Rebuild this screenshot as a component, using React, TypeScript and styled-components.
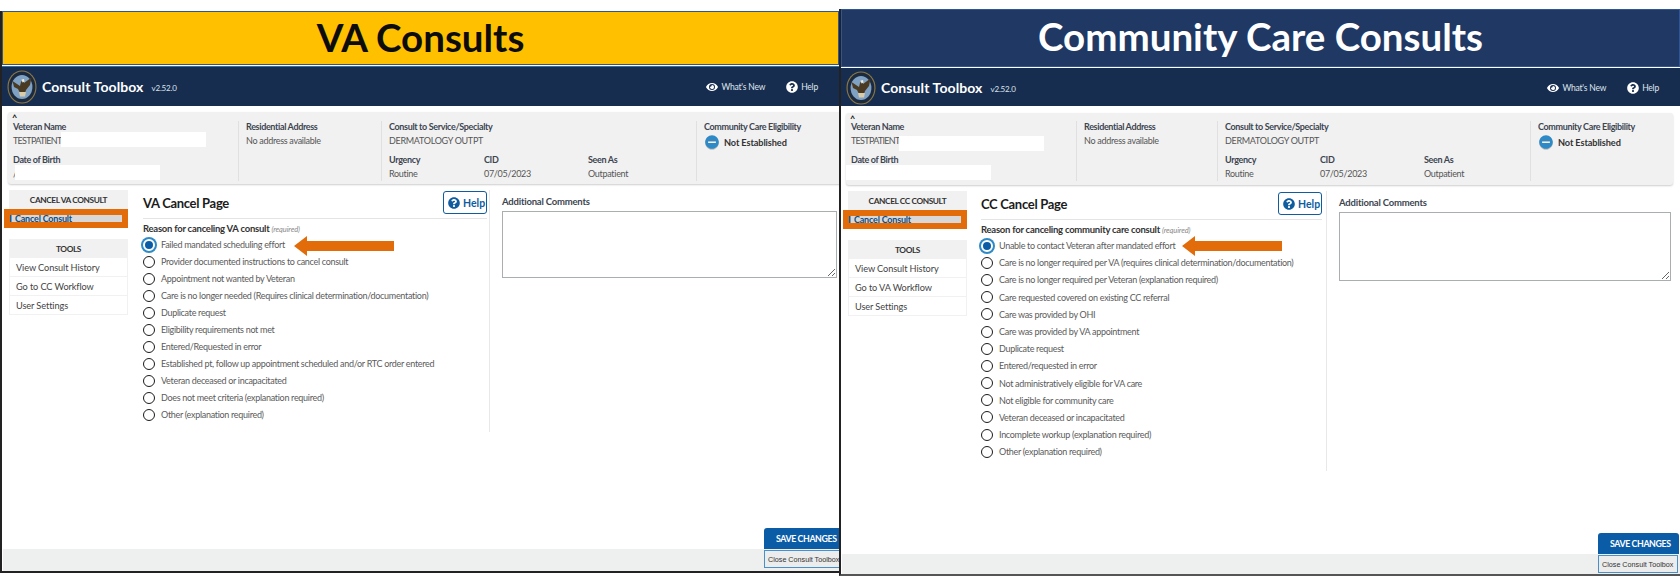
import React from "react";
import styled, { createGlobalStyle } from "styled-components";
import { FaEye, FaQuestionCircle, FaMinusCircle } from "react-icons/fa";

const Global = createGlobalStyle`
  html, body { margin: 0; padding: 0; background: #fff; overflow: hidden; }
  body { font-family: Lato, "Liberation Sans", sans-serif; color: #333; }
  * { box-sizing: border-box; }
`;

type V = { $cc: boolean };

const Page = styled.div`
  display: grid;
  grid-template-columns: 839px 841px;
  width: 1680px;
  height: 577px;
  overflow: hidden;
`;

const Panel = styled.section<V>`
  position: relative;
  display: flex;
  flex-direction: column;
  height: ${(p) => (p.$cc ? 567 : 562)}px;
  margin-top: ${(p) => (p.$cc ? 9 : 11)}px;
  border-left: 2px solid #222;
  border-bottom: 2px solid ${(p) => (p.$cc ? "#555" : "#222")};
  overflow: hidden;
`;

const Banner = styled.h1<V>`
  margin: 0 0 1px;
  height: ${(p) => (p.$cc ? 58 : 54)}px;
  flex: none;
  display: flex;
  align-items: center;
  justify-content: center;
  background: ${(p) => (p.$cc ? "#1f3864" : "#ffc000")};
  border: 1px solid #2f5597;
  color: ${(p) => (p.$cc ? "#fff" : "#0c0c0c")};
  font-size: 38.5px;
  font-weight: 700;
  padding-bottom: ${(p) => (p.$cc ? 4 : 2)}px;
`;

const Nav = styled.header<V>`
  height: ${(p) => (p.$cc ? 38 : 40)}px;
  flex: none;
  display: flex;
  align-items: center;
  background: #172d50;
  border-top: 1px solid ${(p) => (p.$cc ? "#172d50" : "#3a6e98")};
  padding: 0 21px 0 5px;
  color: #fff;
`;

const Brand = styled.span`
  margin-left: 5px;
  font-size: 14px;
  font-weight: 700;
  letter-spacing: 0.1px;
`;

const Version = styled.span`
  margin: 3px auto 0 8px;
  font-size: 8px;
  letter-spacing: -0.2px;
  color: #dfe5ec;
`;

const NavLink = styled.span`
  display: inline-flex;
  align-items: center;
  gap: 3px;
  margin-left: 21px;
  font-size: 8.5px;
  letter-spacing: -0.2px;
  color: #dfe5ec;
  svg { color: #fff; }
`;

const Info = styled.div<V>`
  display: grid;
  position: relative;
  grid-template-columns: ${(p) => (p.$cc ? "230px 141px 313px 1fr" : "230px 143px 315px 1fr")};
  flex: none;
  height: 72px;
  margin: ${(p) => (p.$cc ? "7px 7px 0 5px" : "6px -4px 0 6px")};
  padding-top: ${(p) => (p.$cc ? 8 : 9)}px;
  background: #f1f1f1;
  border-radius: 3px;
  box-shadow: 0 1px 2px rgba(0, 0, 0, 0.2);
`;

const Caret = styled.span`
  position: absolute;
  left: 4px;
  top: 1px;
  font-size: 9px;
  font-weight: 700;
  line-height: 10px;
  color: #111;
`;

const InfoCell = styled.div<{ $first?: boolean }>`
  display: flex;
  flex-direction: column;
  gap: 5.5px;
  height: 60px;
  padding-left: ${(p) => (p.$first ? 5 : 7)}px;
  border-left: ${(p) => (p.$first ? "none" : "1px solid #e0e0e0")};
`;

const Field = styled.div`
  position: relative;
`;

const Label = styled.div`
  font-size: 9px;
  font-weight: 700;
  letter-spacing: -0.35px;
  line-height: 12px;
  color: #3d4551;
  white-space: nowrap;
`;

const Value = styled.div<{ $tight?: boolean }>`
  margin-top: 1px;
  font-size: 9px;
  letter-spacing: ${(p) => (p.$tight ? -0.7 : -0.3)}px;
  line-height: 14px;
  color: #555;
  white-space: nowrap;
`;

const Redact = styled.span<{ $x: number; $y: number }>`
  position: absolute;
  left: ${(p) => p.$x}px;
  top: ${(p) => p.$y}px;
  width: 145px;
  height: 15px;
  background: #fff;
`;

const TripleRow = styled.div`
  display: grid;
  grid-template-columns: 95px 104px 1fr;
`;

const Status = styled.div`
  display: flex;
  align-items: center;
  gap: 5px;
  margin: 2px 0 0 1px;
  font-size: 9.2px;
  font-weight: 700;
  letter-spacing: -0.1px;
  color: #333;
  svg { color: #2e8ac6; filter: drop-shadow(0 1px 0 #bbb); }
`;

const Body = styled.div`
  flex: 1;
  display: flex;
  align-items: flex-start;
  padding: 6px 0 0 7px;
  min-height: 0;
`;

const Side = styled.aside`
  width: 119px;
  flex: none;
  display: flex;
  flex-direction: column;
  gap: 11px;
`;

const SideGroup = styled.div`
  display: flex;
  flex-direction: column;
`;

const SideHead = styled.div`
  height: 19px;
  display: flex;
  align-items: center;
  justify-content: center;
  background: #f1f1f1;
  font-size: 8.3px;
  font-weight: 700;
  letter-spacing: -0.4px;
  color: #333;
`;

const CurrentItem = styled.div`
  height: 19px;
  margin-left: -5px;
  display: flex;
  align-items: center;
  padding-left: 5px;
  background: #d8d8d8;
  border: 6px solid #e36c0a;
  box-shadow: inset 1.5px 0 #0f5c9e;
  font-size: 9px;
  font-weight: 700;
  letter-spacing: -0.2px;
  color: #0f4c81;
`;

const SideItem = styled.div`
  height: 19px;
  display: flex;
  align-items: center;
  padding-left: 6px;
  border: 1.5px solid #f1f1f1;
  border-top-width: 0;
  font-size: 9.2px;
  letter-spacing: -0.1px;
  color: #444;
`;

const Form = styled.form<V>`
  flex: none;
  margin-left: ${(p) => (p.$cc ? 14 : 15)}px;
  width: ${(p) => (p.$cc ? 346 : 347)}px;
  height: ${(p) => (p.$cc ? 280 : 242)}px;
  padding-right: ${(p) => (p.$cc ? 4 : 2)}px;
  border-right: 1px solid #e8e8e8;
`;

const FormHead = styled.div`
  height: 29px;
  display: flex;
  align-items: center;
  justify-content: space-between;
  border-bottom: 1px solid #e4e4e4;
  padding-bottom: 3px;
`;

const FormTitle = styled.h2`
  margin: 0;
  font-size: 13px;
  font-weight: 700;
  letter-spacing: -0.3px;
  color: #1b1b1b;
`;

const HelpButton = styled.button`
  display: inline-flex;
  align-items: center;
  gap: 3px;
  width: 44px;
  height: 23px;
  padding: 0 0 0 4px;
  background: #fff;
  border: 1px solid #0f5c9e;
  border-radius: 3px;
  font: 700 10.5px Lato, sans-serif;
  color: #0f5c9e;
`;

const Legend = styled.div`
  margin: 3px 0 0;
  font-size: 9.5px;
  font-weight: 700;
  letter-spacing: -0.25px;
  line-height: 13px;
  color: #333;
`;

const Hint = styled.em`
  font-size: 7.5px;
  font-weight: 400;
  letter-spacing: -0.1px;
  color: #8a8a8a;
`;

const Option = styled.label<V>`
  display: flex;
  align-items: center;
  height: ${(p) => (p.$cc ? 17.2 : 17)}px;
  gap: 6px;
  font-size: 9px;
  letter-spacing: -0.3px;
  color: #5b5b5b;
  white-space: nowrap;
`;

const Radio = styled.span<{ $on?: boolean }>`
  width: 12px;
  height: 12px;
  flex: none;
  border-radius: 50%;
  border: ${(p) => (p.$on ? "2.5px solid #fff" : "1.4px solid #1b1b1b")};
  background: ${(p) => (p.$on ? "#0a5ca6" : "#fff")};
  box-shadow: ${(p) => (p.$on ? "0 0 0 2px #2e8ac6" : "none")};
`;

const Comments = styled.div<V>`
  flex: 1;
  min-width: 0;
  margin: 4px ${(p) => (p.$cc ? 9 : 2)}px 0 12px;
`;

const CommentLabel = styled.div`
  margin-bottom: 2px;
  font-size: 9.5px;
  font-weight: 700;
  letter-spacing: -0.2px;
  line-height: 15px;
  color: #3d4551;
`;

const Area = styled.textarea<V>`
  display: block;
  width: 100%;
  height: ${(p) => (p.$cc ? 69 : 67)}px;
  background: #fff;
  border: 1px solid #a9aeb1;
  outline: none;
`;

const SaveRow = styled.div<V>`
  display: flex;
  justify-content: flex-end;
  flex: none;
  margin-right: ${(p) => (p.$cc ? 1 : -6)}px;
`;

const Save = styled.button`
  width: 81px;
  height: 21px;
  padding: 0 0 0 12px;
  background: #0a5ca6;
  border: 0;
  border-radius: 3px 3px 0 0;
  font: 700 8.8px Lato, sans-serif;
  letter-spacing: -0.4px;
  color: #fff;
  text-align: left;
`;

const Footer = styled.footer<V>`
  flex: none;
  height: ${(p) => (p.$cc ? 20 : 22)}px;
  display: flex;
  justify-content: flex-end;
  align-items: flex-start;
  background: #eef0f0;
  padding: ${(p) => (p.$cc ? "1px 2px 0 0" : "1px 0 0 0")};
  margin-left: 1px;
  margin-right: ${(p) => (p.$cc ? 0 : -5)}px;
`;

const Close = styled.button`
  width: 80px;
  height: 18px;
  padding: 0 0 0 3px;
  background: #ececec;
  border: 1px solid #4a90c8;
  font: 400 7.2px "Liberation Sans", sans-serif;
  color: #333;
  text-align: left;
  white-space: nowrap;
`;

const Arrow = styled.svg<V>`
  position: absolute;
  left: ${(p) => (p.$cc ? 339 : 290)}px;
  top: ${(p) => (p.$cc ? 226 : 224)}px;
`;

function Seal() {
  return (
    <svg width="30" height="34" viewBox="0 0 30 34" aria-hidden="true">
      <ellipse cx="15" cy="17" rx="14.5" ry="16.5" fill="#8f7a45" />
      <ellipse cx="15" cy="17" rx="13.4" ry="15.4" fill="#1c2a40" />
      <ellipse cx="15" cy="17" rx="10.4" ry="12" fill="#7fa2c4" />
      <path d="M5.5 11 L13 16 L14 12 L16 9.5 L17 13 L24.5 7.5 L23 15 L19 20 L18 23 L13 23 L11 19 L7 17 Z" fill="#4a3a22" />
      <path d="M12 22 L19 22 L18 26.5 L13 26.5 Z" fill="#d9ccab" />
      <path d="M14.5 9.5 L17 9 L17.5 11.5 L15.5 12.5 Z" fill="#efe9d6" />
    </svg>
  );
}

const vaReasons = [
  "Provider documented instructions to cancel consult",
  "Appointment not wanted by Veteran",
  "Care is no longer needed (Requires clinical determination/documentation)",
  "Duplicate request",
  "Eligibility requirements not met",
  "Entered/Requested in error",
  "Established pt, follow up appointment scheduled and/or RTC order entered",
  "Veteran deceased or incapacitated",
  "Does not meet criteria (explanation required)",
  "Other (explanation required)",
];

const ccReasons = [
  "Care is no longer required per VA (requires clinical determination/documentation)",
  "Care is no longer required per Veteran (explanation required)",
  "Care requested covered on existing CC referral",
  "Care was provided by OHI",
  "Care was provided by VA appointment",
  "Duplicate request",
  "Entered/requested in error",
  "Not administratively eligible for VA care",
  "Not eligible for community care",
  "Veteran deceased or incapacitated",
  "Incomplete workup (explanation required)",
  "Other (explanation required)",
];

type ConsultProps = {
  cc: boolean;
  banner: string;
  sideHead: string;
  workflow: string;
  title: string;
  legend: string;
  selected: string;
  reasons: string[];
};

function Consult({ cc, banner, sideHead, workflow, title, legend, selected, reasons }: ConsultProps) {
  return (
    <Panel $cc={cc}>
      <Banner $cc={cc}>{banner}</Banner>
      <Nav $cc={cc}>
        <Seal />
        <Brand>Consult Toolbox</Brand>
        <Version>v2.52.0</Version>
        <NavLink><FaEye size={12} />What's New</NavLink>
        <NavLink><FaQuestionCircle size={12} />Help</NavLink>
      </Nav>
      <Info $cc={cc}>
        <Caret>^</Caret>
        <InfoCell $first>
          <Field>
            <Label>Veteran Name</Label>
            <Value $tight>TESTPATIENT</Value>
            <Redact $x={48} $y={cc ? 15 : 11} />
          </Field>
          <Field>
            <Label>Date of Birth</Label>
            <Value>/</Value>
            <Redact $x={cc ? -5 : 2} $y={11} />
          </Field>
        </InfoCell>
        <InfoCell>
          <Field>
            <Label>Residential Address</Label>
            <Value>No address available</Value>
          </Field>
        </InfoCell>
        <InfoCell>
          <Field>
            <Label>Consult to Service/Specialty</Label>
            <Value>DERMATOLOGY OUTPT</Value>
          </Field>
          <TripleRow>
            <Field><Label>Urgency</Label><Value>Routine</Value></Field>
            <Field><Label>CID</Label><Value>07/05/2023</Value></Field>
            <Field><Label>Seen As</Label><Value>Outpatient</Value></Field>
          </TripleRow>
        </InfoCell>
        <InfoCell>
          <Field>
            <Label>Community Care Eligibility</Label>
            <Status><FaMinusCircle size={14} />Not Established</Status>
          </Field>
        </InfoCell>
      </Info>
      <Body>
        <Side>
          <SideGroup>
            <SideHead>{sideHead}</SideHead>
            <CurrentItem>Cancel Consult</CurrentItem>
          </SideGroup>
          <SideGroup>
            <SideHead>TOOLS</SideHead>
            <SideItem>View Consult History</SideItem>
            <SideItem>{workflow}</SideItem>
            <SideItem>User Settings</SideItem>
          </SideGroup>
        </Side>
        <Form $cc={cc}>
          <FormHead>
            <FormTitle>{title}</FormTitle>
            <HelpButton type="button"><FaQuestionCircle size={12} />Help</HelpButton>
          </FormHead>
          <Legend>{legend} <Hint>(required)</Hint></Legend>
          <Option $cc={cc}><Radio $on />{selected}</Option>
          {reasons.map((r) => (
            <Option $cc={cc} key={r}><Radio />{r}</Option>
          ))}
        </Form>
        <Comments $cc={cc}>
          <CommentLabel>Additional Comments</CommentLabel>
          <Area $cc={cc} readOnly />
        </Comments>
      </Body>
      <SaveRow $cc={cc}><Save type="button">SAVE CHANGES</Save></SaveRow>
      <Footer $cc={cc}><Close type="button">Close Consult Toolbox</Close></Footer>
      <Arrow $cc={cc} width="104" height="22" viewBox="0 0 104 22" aria-hidden="true">
        <path d="M2 11 L15 1 L15 6 L102 6 L102 16 L15 16 L15 21 Z" fill="#e36c0a" />
      </Arrow>
    </Panel>
  );
}

export default function App() {
  return (
    <Page>
      <Global />
      <Consult
        cc={false}
        banner="VA Consults"
        sideHead="CANCEL VA CONSULT"
        workflow="Go to CC Workflow"
        title="VA Cancel Page"
        legend="Reason for canceling VA consult"
        selected="Failed mandated scheduling effort"
        reasons={vaReasons}
      />
      <Consult
        cc
        banner="Community Care Consults"
        sideHead="CANCEL CC CONSULT"
        workflow="Go to VA Workflow"
        title="CC Cancel Page"
        legend="Reason for canceling community care consult"
        selected="Unable to contact Veteran after mandated effort"
        reasons={ccReasons}
      />
    </Page>
  );
}
